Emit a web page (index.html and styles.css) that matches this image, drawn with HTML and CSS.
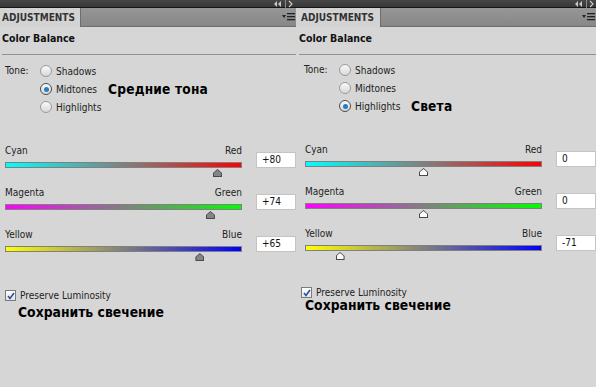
FILE: index.html
```html
<!DOCTYPE html>
<html lang="ru">
<head>
  <meta charset="UTF-8">
  <title>Color Balance</title>
  <link rel="stylesheet" href="styles.css">
</head>
<body>

<div class="screen">

  <!-- left panel: midtones -->
  <section class="panel panel-left">
    <div class="strip">
      <svg class="strip-icons" width="22" height="8" viewBox="0 0 22 8">
        <path d="M4 1 L1 4 L4 7 Z M8 1 L5 4 L8 7 Z" fill="#c8c8c8"/>
        <rect x="12" y="0" width="1" height="8" fill="#8a8a8a"/>
        <path d="M16 1 L19 4 L16 7" stroke="#c8c8c8" stroke-width="1.2" fill="none"/>
      </svg>
    </div>
    <div class="tabs">
      <div class="tab">ADJUSTMENTS</div>
      <div class="tab-rest">
        <svg class="menu-icon" width="13" height="8" viewBox="0 0 13 8">
          <path d="M0 2 L4 2 L2 5 Z" fill="#222"/>
          <rect x="5" y="0" width="8" height="1.3" fill="#222"/>
          <rect x="5" y="3" width="8" height="1.3" fill="#222"/>
          <rect x="5" y="6" width="8" height="1.3" fill="#222"/>
        </svg>
      </div>
    </div>
    <div class="body">
      <div class="heading">Color Balance</div>

      <div class="tone">
        <div class="tone-label">Tone:</div>
        <div class="tone-opts">
          <div class="opt"><span class="radio"></span><span class="opt-text">Shadows</span></div>
          <div class="opt"><span class="radio on"></span><span class="opt-text">Midtones</span><span class="note">Средние тона</span></div>
          <div class="opt"><span class="radio"></span><span class="opt-text">Highlights</span></div>
        </div>
      </div>

      <div class="sliders">
        <div class="slider">
          <div class="track-col">
            <div class="ends"><span>Cyan</span><span>Red</span></div>
            <div class="bar bar-cr"><span class="thumb" style="left: 90%"></span></div>
          </div>
          <div class="value">+80</div>
        </div>
        <div class="slider">
          <div class="track-col">
            <div class="ends"><span>Magenta</span><span>Green</span></div>
            <div class="bar bar-mg"><span class="thumb" style="left: 87%"></span></div>
          </div>
          <div class="value">+74</div>
        </div>
        <div class="slider">
          <div class="track-col">
            <div class="ends"><span>Yellow</span><span>Blue</span></div>
            <div class="bar bar-yb"><span class="thumb" style="left: 82.5%"></span></div>
          </div>
          <div class="value">+65</div>
        </div>
      </div>

      <div class="preserve">
        <span class="check">
          <svg width="8" height="8" viewBox="0 0 8 8"><path d="M1 4 L3 6.5 L7 1" stroke="#2a4fa8" stroke-width="1.6" fill="none"/></svg>
        </span>
        <span>Preserve Luminosity</span>
      </div>
      <div class="caption">Сохранить свечение</div>
    </div>
  </section>

  <!-- right panel: highlights -->
  <section class="panel panel-right">
    <div class="strip">
      <svg class="strip-icons" width="22" height="8" viewBox="0 0 22 8">
        <path d="M4 1 L1 4 L4 7 Z M8 1 L5 4 L8 7 Z" fill="#c8c8c8"/>
        <rect x="12" y="0" width="1" height="8" fill="#8a8a8a"/>
        <path d="M16 1 L19 4 L16 7" stroke="#c8c8c8" stroke-width="1.2" fill="none"/>
      </svg>
    </div>
    <div class="tabs">
      <div class="tab">ADJUSTMENTS</div>
      <div class="tab-rest">
        <svg class="menu-icon" width="13" height="8" viewBox="0 0 13 8">
          <path d="M0 2 L4 2 L2 5 Z" fill="#222"/>
          <rect x="5" y="0" width="8" height="1.3" fill="#222"/>
          <rect x="5" y="3" width="8" height="1.3" fill="#222"/>
          <rect x="5" y="6" width="8" height="1.3" fill="#222"/>
        </svg>
      </div>
    </div>
    <div class="body">
      <div class="heading">Color Balance</div>

      <div class="tone">
        <div class="tone-label">Tone:</div>
        <div class="tone-opts">
          <div class="opt"><span class="radio"></span><span class="opt-text">Shadows</span></div>
          <div class="opt"><span class="radio"></span><span class="opt-text">Midtones</span></div>
          <div class="opt"><span class="radio on"></span><span class="opt-text">Highlights</span><span class="note">Света</span></div>
        </div>
      </div>

      <div class="sliders">
        <div class="slider">
          <div class="track-col">
            <div class="ends"><span>Cyan</span><span>Red</span></div>
            <div class="bar bar-cr"><span class="thumb idle" style="left: 50%"></span></div>
          </div>
          <div class="value">0</div>
        </div>
        <div class="slider">
          <div class="track-col">
            <div class="ends"><span>Magenta</span><span>Green</span></div>
            <div class="bar bar-mg"><span class="thumb idle" style="left: 50%"></span></div>
          </div>
          <div class="value">0</div>
        </div>
        <div class="slider">
          <div class="track-col">
            <div class="ends"><span>Yellow</span><span>Blue</span></div>
            <div class="bar bar-yb"><span class="thumb idle" style="left: 14.5%"></span></div>
          </div>
          <div class="value">-71</div>
        </div>
      </div>

      <div class="preserve">
        <span class="check">
          <svg width="8" height="8" viewBox="0 0 8 8"><path d="M1 4 L3 6.5 L7 1" stroke="#2a4fa8" stroke-width="1.6" fill="none"/></svg>
        </span>
        <span>Preserve Luminosity</span>
      </div>
      <div class="caption">Сохранить свечение</div>
    </div>
  </section>

</div>

</body>
</html>
```

FILE: styles.css
```css
html, body { margin: 0; padding: 0; }
body {
  background: #d6d6d6;
  font-family: "DejaVu Sans Condensed", "DejaVu Sans", sans-serif;
  font-stretch: condensed;
  font-size: 10px;
  color: #1e1e1e;
}
.screen { display: flex; width: 596px; height: 387px; overflow: hidden; }
.panel { flex: none; height: 387px; background: #d6d6d6; }
.panel-left { width: 296px; }
.panel-right { width: 300px; }

/* dark strip on top */
.strip {
  height: 7px;
  background: linear-gradient(#474747, #383838);
  border-bottom: 1px solid #151515;
  display: flex;
  justify-content: flex-end;
  align-items: center;
}
.strip-icons { margin-right: 1px; }
.panel-right .strip-icons { margin-right: 0; }

/* tab row */
.tabs { display: flex; height: 19px; }
.tab {
  width: 78px;
  padding-left: 2px;
  background: #d3d3d3;
  font-weight: bold;
  font-size: 10px;
  color: #333;
  line-height: 19px;
  border-right: 1px solid #6e6e6e;
}
.panel-right .tab { width: 79px; padding-left: 5px; }
.tab-rest {
  flex: 1;
  background: linear-gradient(#969696, #878787);
  border-bottom: 1px solid #6e6e6e;
  box-sizing: border-box;
  display: flex;
  justify-content: flex-end;
  align-items: center;
}
.menu-icon { margin-right: 1px; }

.body { padding-left: 5px; }
.panel-right .body { padding-left: 9px; }

.heading {
  height: 28px;
  padding-top: 4px;
  box-sizing: border-box;
  line-height: 14px;
  font-weight: bold;
  font-size: 10.5px;
  color: #111;
  border-bottom: 1px solid #929292;
}
.panel-left .heading { margin-left: -3px; }
.panel-right .heading { margin-left: -6px; }

/* tone radios */
.tone { display: flex; margin-top: 7px; }
.panel-right .tone { margin-left: -1px; margin-top: 6px; }
.tone-label { width: 35px; line-height: 18px; color: #222; }
.opt { display: flex; align-items: center; height: 18px; }
.radio {
  width: 10px;
  height: 10px;
  border: 1px solid #9a9a9a;
  border-radius: 50%;
  background: linear-gradient(#fafafa, #d8d8d8);
  position: relative;
  flex: none;
}
.radio.on { border-color: #4a4a4a; }
.radio.on::after {
  content: "";
  position: absolute;
  left: 2.5px;
  top: 2.5px;
  width: 5px;
  height: 5px;
  border-radius: 50%;
  background: #1f7fc7;
}
.opt-text { margin-left: 4px; width: 52px; color: #222; }
.note {
  font-size: 13.6px;
  font-weight: bold;
  color: #000;
  font-stretch: normal;
  letter-spacing: 0.2px;
}
.panel-right .note { margin-left: 4px; }

/* sliders */
.sliders { margin-top: 28px; }
.slider { display: flex; height: 42px; }
.track-col { width: 237px; }
.ends {
  display: flex;
  justify-content: space-between;
  line-height: 13px;
  color: #222;
}
.bar {
  position: relative;
  margin-top: 5px;
  height: 4px;
  border: 1px solid #808080;
}
.bar-cr { background: linear-gradient(90deg, #00ffff, #808080 50%, #ff0000); }
.bar-mg { background: linear-gradient(90deg, #ff00ff, #808080 50%, #00ff00); }
.bar-yb { background: linear-gradient(90deg, #ffff00, #808080 50%, #0000ff); }
.thumb {
  position: absolute;
  top: 6px;
  width: 9px;
  height: 8px;
  margin-left: -4.5px;
  background: #4a4a4a;
  clip-path: polygon(50% 0, 100% 50%, 100% 100%, 0 100%, 0 50%);
}
.thumb::after {
  content: "";
  position: absolute;
  left: 1px;
  top: 1px;
  width: 7px;
  height: 6px;
  background: #858585;
  clip-path: polygon(50% 0, 100% 50%, 100% 100%, 0 100%, 0 50%);
}
.thumb.idle::after { background: #fbfbfb; }

.value {
  margin-left: 14px;
  margin-top: 8px;
  width: 40px;
  height: 16px;
  box-sizing: border-box;
  background: #fff;
  border: 1px solid #c4c4c4;
  padding-left: 5px;
  line-height: 14px;
  color: #111;
}

/* preserve luminosity */
.preserve {
  display: flex;
  align-items: center;
  margin-top: 19px;
  height: 13px;
  color: #222;
}
.panel-right .preserve { margin-top: 17px; margin-left: -4px; }
.check {
  width: 9px;
  height: 9px;
  border: 1px solid #7a7a7a;
  background: linear-gradient(#ffffff, #e4e4e4);
  margin-right: 4px;
  display: flex;
  align-items: center;
  justify-content: center;
}
.caption {
  margin-left: 13px;
  margin-top: 1px;
  font-size: 13.8px;
  font-weight: bold;
  font-stretch: normal;
  line-height: 18px;
  color: #000;
}
.panel-right .caption { margin-left: 0; margin-top: -3px; }
```
